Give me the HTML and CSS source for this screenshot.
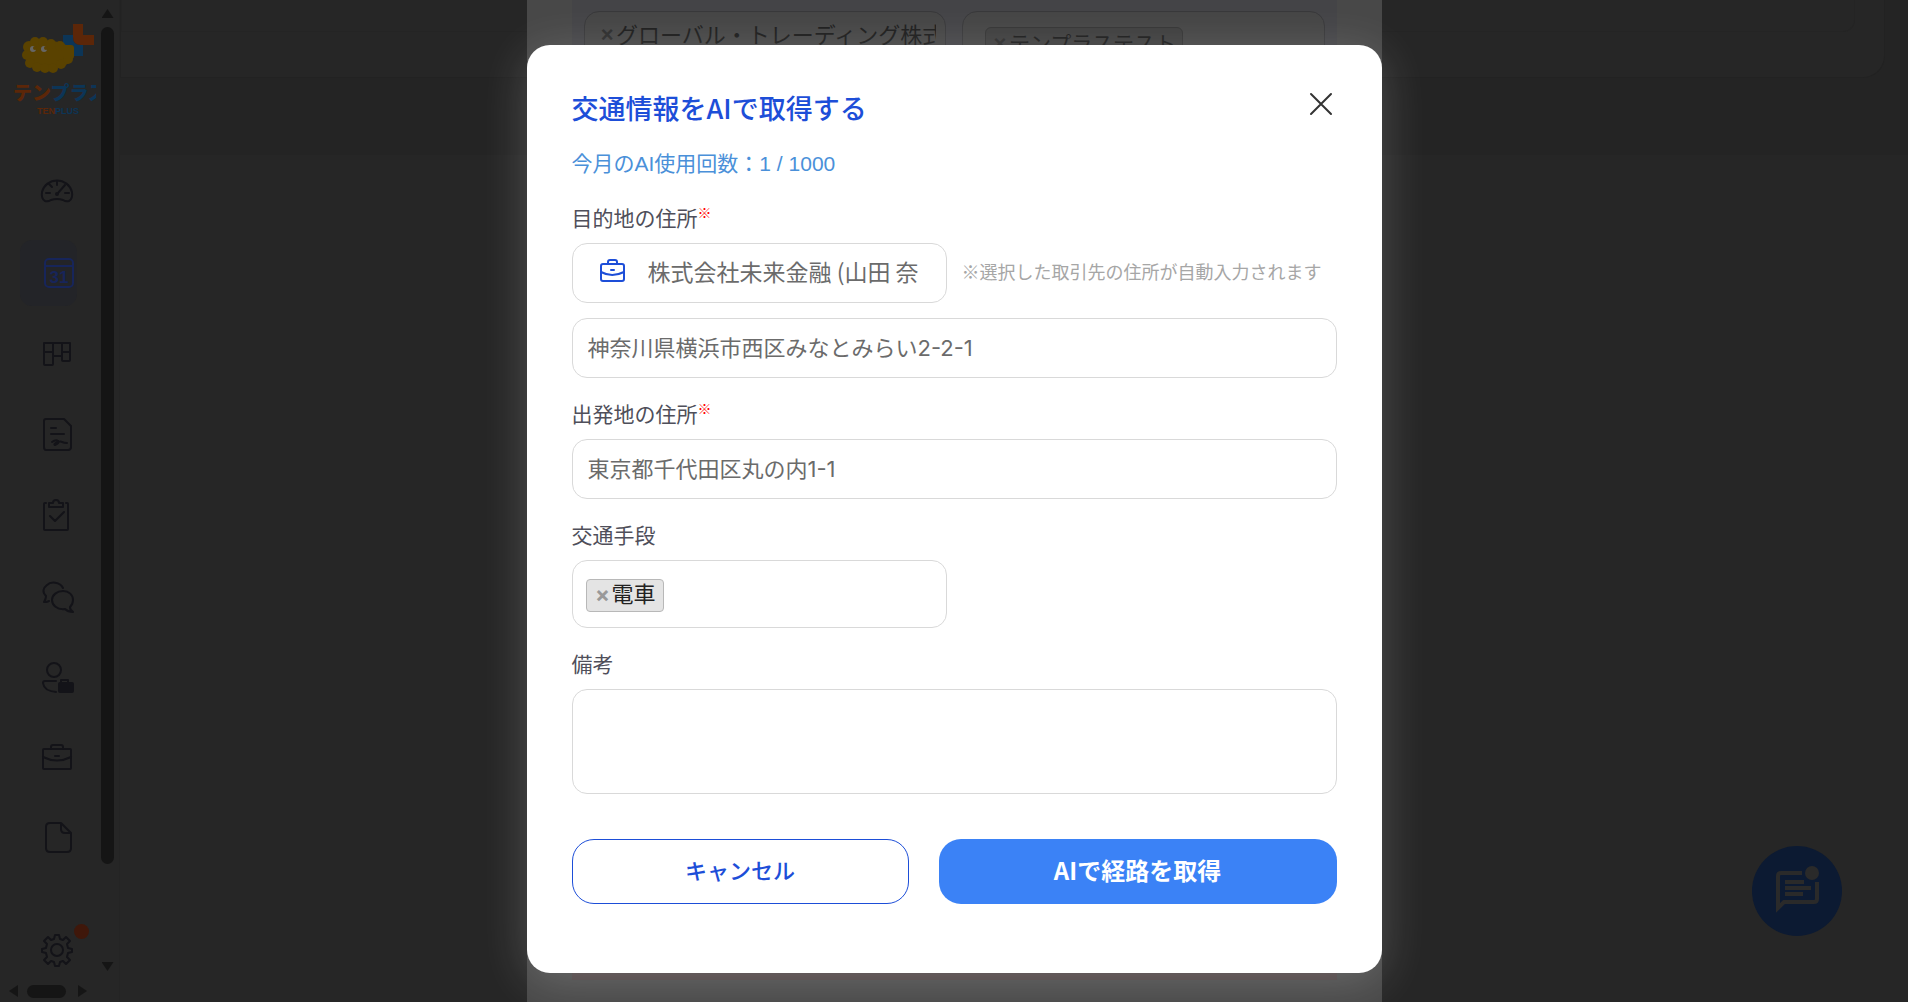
FILE: index.html
```html
<!DOCTYPE html>
<html lang="ja">
<head>
<meta charset="utf-8">
<meta name="viewport" content="width=device-width, initial-scale=1">
<title>交通情報をAIで取得する</title>
<link rel="stylesheet" href="styles.css">
</head>
<body>
<div class="app">
  <aside class="sidebar">
    <div class="sidebar-body">
      <a class="logo" href="#" aria-label="テンプラス">
        <svg class="logo-mark" viewBox="0 0 82 56" aria-hidden="true">
          <path class="mark-blue" d="M50 13h10v2q0 8 8 8h2v11H60V24H50z"/>
          <path class="mark-orange" d="M60 2h10v11h11v10H68q-8 0-8-8z"/>
          <g class="mark-yellow">
            <ellipse cx="36" cy="33" rx="24" ry="14"/>
            <circle cx="16" cy="25" r="6"/><circle cx="22" cy="20" r="5"/><circle cx="30" cy="20" r="5"/><circle cx="38" cy="22" r="5"/><circle cx="47" cy="24" r="5"/>
            <circle cx="14" cy="33" r="5"/><circle cx="17" cy="41" r="5"/><circle cx="24" cy="45" r="5"/><circle cx="32" cy="46" r="5"/><circle cx="40" cy="46" r="5"/><circle cx="48" cy="42" r="5"/><circle cx="55" cy="37" r="5"/>
            <rect x="50" y="23" width="11" height="14" rx="3"/>
          </g>
          <g class="mark-white"><circle cx="20" cy="27" r="3"/><circle cx="31" cy="27" r="3"/></g>
          <g class="mark-yellow"><circle cx="22" cy="26" r="2"/><circle cx="33" cy="26" r="2"/></g>
        </svg>
        <span class="logo-name"><span class="warm">テン</span><span class="cool">プラス</span></span>
        <span class="logo-sub"><span class="warm">TEN</span><span class="cool">PLUS</span></span>
      </a>
      <nav class="nav" aria-label="メイン">
        <a href="#" aria-label="ダッシュボード"><svg viewBox="0 2 36 36"><path d="M6 29q-4-2-3-9a15.500 15.500 0 0 1 30 0q1 7-3 9-3 1-6-1-6-2-12 0-3 2-6 1z"/><path d="M18 9v4M10 12l3 3M7 21h4M26 21h4M19 21l7-8"/><circle class="solid" cx="18" cy="22" r="1"/></svg></a>
        <a class="active" href="#" aria-label="カレンダー"><svg viewBox="0 0 36 36"><rect x="6" y="4" width="28" height="28" rx="4"/><path d="M6 11h28"/><text x="20" y="28">31</text></svg></a>
        <a href="#" aria-label="ボード"><svg viewBox="0 0 36 36"><path d="M5 7h26v17q0 1-1 1h-6q-1 0-1-1V7M14 7v21q0 1-1 1H6q-1 0-1-1V7M5 16h9M23 16h8M14 20h9"/></svg></a>
        <a href="#" aria-label="契約書"><svg viewBox="0 0 36 36"><path d="M7 2h18l7 7v21q0 3-3 3H7q-2 0-2-3V4q0-2 2-2zM12 11h5M12 17h13M13 25q4-3 6-1t-3 4q-2-1 3-3 3-1 4 0 2 1 5 1"/></svg></a>
        <a href="#" aria-label="タスク"><svg viewBox="0 0 36 36"><path d="M7 5H6q-1 0-1 1v25q0 1 1 1h22q1 0 1-1V6q0-1-1-1h-1M10 9V5h4q0-3 3-3t3 3h4v4zM11 18l5 5 9-9"/></svg></a>
        <a href="#" aria-label="チャット"><svg viewBox="0 0 36 36"><path d="M24 9C21 3 12 2 8 6c-4 3-5 7-1 11 0 3-1 4-2 6 2 0 4 0 5-1M24 12c6 0 10 4 10 9 0 3-1 5-3 7 0 2 1 4 3 5-4 0-6-1-8-3-8 1-13-4-13-9s5-9 11-9z"/></svg></a>
        <a href="#" aria-label="担当者"><svg viewBox="0 0 36 36"><circle cx="15" cy="10" r="7"/><path d="M17 21H6q-2 0-2 2 1 8 13 9M22 23v-3h7v3"/><rect class="solid" x="20" y="23" width="14" height="9" rx="1"/></svg></a>
        <a href="#" aria-label="取引先"><svg viewBox="0 0 36 36"><rect x="4" y="8" width="28" height="20" rx="1"/><path d="M12 8V6q0-2 2-2h8q2 0 2 2v2M4 16q14 7 28 0M16 15h4"/></svg></a>
        <a href="#" aria-label="ファイル"><svg viewBox="0 0 36 36"><path d="M22 1H11q-4 0-4 4v21q0 4 4 4h17q4 0 4-4V11zM22 1v6q0 4 4 4h6"/></svg></a>
      </nav>
      <a class="settings" href="#" aria-label="設定"><svg viewBox="0 0 36 36"><path d="M16 3h4l1 4 3 1 3-3 4 4-3 3 1 4 4 1v3l-4 1-1 4 3 3-4 4-3-3-3 1-1 4h-4l-1-4-3-1-3 3-4-4 3-3-1-4-4-1v-3l4-1 1-4-3-3 4-4 3 3 3-1z"/><circle cx="18" cy="18" r="6"/></svg><span class="dot"></span></a>
      <div class="hscroll" aria-hidden="true"><i class="tri left"></i><i class="hthumb"></i><i class="tri right"></i></div>
    </div>
    <div class="vscroll" aria-hidden="true"><i class="tri up"></i><i class="vthumb"></i><i class="tri down"></i></div>
  </aside>
  <main class="main">
    <div class="band"><div class="card"><div class="card-inner"></div></div></div>
  </main>
</div>

<button class="fab" type="button" aria-label="メッセージ">
  <svg viewBox="0 0 48 48" aria-hidden="true"><path class="bubble" d="M29 8H8q-3 0-3 3v32l6-6h30q3 0 3-3V17"/><path class="lines" d="M12 17h19M12 23h26M12 29h18"/><circle cx="39" cy="8" r="7"/></svg>
</button>

<div class="sheet">
  <div class="sheet-body">
    <div class="sheet-field"><button class="x" type="button" aria-label="削除">×</button><span class="clip">グローバル・トレーディング株式</span></div>
    <div class="sheet-field"><span class="sheet-tag"><button class="x" type="button" aria-label="削除">×</button>テンプラステスト</span></div>
  </div>
</div>

<div class="overlay">
  <form class="modal" role="dialog" aria-modal="true" aria-labelledby="dlg-title">
    <header class="modal-head">
      <h1 id="dlg-title">交通情報をAIで取得する</h1>
      <button class="close" type="button" aria-label="閉じる"><svg viewBox="0 0 24 24"><path d="M2 2l20 20M22 2L2 22"/></svg></button>
    </header>
    <p class="usage">今月のAI使用回数：1 / 1000</p>

    <div class="group">
      <label for="client">目的地の住所<sup>※</sup></label>
      <div class="row">
        <div class="control half with-icon">
          <svg viewBox="0 0 26 24" aria-hidden="true"><rect x="1" y="5" width="23" height="17" rx="2"/><path d="M8 5V3q0-2 2-2h5q2 0 2 2v2M1 13q11 6 23 0M11 11h3"/></svg>
          <input id="client" type="text" value="株式会社未来金融 (山田 奈">
        </div>
        <span class="hint">※選択した取引先の住所が自動入力されます</span>
      </div>
      <input class="control" type="text" aria-label="目的地の住所" value="神奈川県横浜市西区みなとみらい2-2-1">
    </div>

    <div class="group">
      <label for="origin">出発地の住所<sup>※</sup></label>
      <input id="origin" class="control" type="text" value="東京都千代田区丸の内1-1">
    </div>

    <div class="group">
      <span class="label" id="means">交通手段</span>
      <div class="control half tags" role="group" aria-labelledby="means"><span class="tag"><button class="x" type="button" aria-label="電車を削除">×</button>電車</span></div>
    </div>

    <div class="group">
      <label for="note">備考</label>
      <textarea id="note" class="control"></textarea>
    </div>

    <footer class="actions">
      <button class="btn cancel" type="button">キャンセル</button>
      <button class="btn primary" type="submit">AIで経路を取得</button>
    </footer>
  </form>
</div>
</body>
</html>
```
FILE: styles.css
```css
* { box-sizing: border-box; }
html, body { height: 100%; }
body {
  margin: 0;
  background: #262626;
  overflow: hidden;
  font-family: "Liberation Sans", "Noto Sans CJK JP", sans-serif;
  font-size: 22px;
}
button, input, textarea { font: inherit; }
button { padding: 0; border: 0; background: none; cursor: pointer; }
svg { display: block; fill: none; }

/* Dimmed application */
.app { display: flex; min-height: 100vh; }
.sidebar { display: flex; width: 120px; height: 100vh; border-right: 1px solid #242424; }
.sidebar-body { display: flex; flex-direction: column; width: 101px; overflow: hidden; }
.logo { display: flex; flex-direction: column; width: 83px; height: 129px; margin: 22px 5px 0 13px; text-decoration: none; overflow: hidden; }
.logo-mark { width: 82px; height: 56px; }
.logo-name { font-size: 19px; line-height: 32px; font-weight: 900; white-space: nowrap; }
.logo-sub { margin-top: -4px; padding-left: 24px; font-size: 9px; line-height: 10px; font-weight: 700; }
.warm { color: #5c2608; }
.cool { color: #0c3557; }
.mark-blue { fill: #0c3557; }
.mark-orange { fill: #5c2608; }
.mark-yellow { fill: #5a4200; }
.mark-white { fill: #666; }
.nav { display: flex; flex-direction: column; }
.nav a { display: flex; align-items: center; height: 81px; padding-left: 39px; }
.nav svg, .settings svg { flex: none; width: 36px; height: 36px; stroke: #131318; stroke-width: 2; stroke-linejoin: round; stroke-linecap: round; }
.nav .solid { fill: #131318; }
.nav a.active { height: 66px; width: 57px; margin: 8px 0 7px 20px; padding-left: 19px; border-radius: 12px; background: #232428; }
.nav a.active svg { stroke: #17255a; }
.nav text { fill: #17255a; stroke: none; font: 700 17px "Liberation Sans", sans-serif; text-anchor: middle; }
.settings { display: flex; align-items: flex-start; margin: auto 0 0; padding: 8px 0 0 39px; height: 60px; }
.dot { width: 15px; height: 15px; margin: -8px 0 0 -1px; border-radius: 50%; background: #3f170a; }
.hscroll { display: flex; align-items: center; height: 14px; margin-bottom: 4px; padding-left: 9px; }
.hthumb { width: 39px; height: 13px; margin: 0 12px 0 9px; border-radius: 7px; background: #151515; }
.vscroll { display: flex; flex-direction: column; align-items: center; width: 13px; padding: 9px 0 31px; }
.vthumb { flex: none; width: 13px; height: 87%; margin: 9px 0 auto; border-radius: 7px; background: #151515; }
.tri { flex: none; background: #151515; }
.tri.up, .tri.down { width: 12px; height: 9px; }
.tri.left, .tri.right { width: 9px; height: 12px; }
.up { clip-path: polygon(50% 0, 100% 100%, 0 100%); }
.down { clip-path: polygon(0 0, 100% 0, 50% 100%); }
.left { clip-path: polygon(0 50%, 100% 0, 100% 100%); }
.right { clip-path: polygon(0 0, 100% 50%, 0 100%); }
.main { flex: 1; }
.band { height: 155px; padding-right: 23px; background: #242424; }
.card { height: 78px; padding-right: 29px; border: 1px solid #222; border-top: 0; border-radius: 0 0 22px 0; background: #262626; }
.card-inner { height: 32px; border: 1px solid #242424; border-top: 0; border-radius: 0 0 12px 0; }
.fab { display: flex; align-items: center; justify-content: center; position: fixed; right: 66px; bottom: 66px; width: 90px; height: 90px; border-radius: 50%; background: #0c1a32; }
.fab svg { width: 48px; height: 48px; margin-top: -4px; fill: #2a2a2a; }
.fab .bubble, .fab .lines { fill: none; stroke: #2a2a2a; stroke-width: 4; }

/* Form sheet that lies behind the dialog */
.sheet { position: fixed; inset: 0; width: 855px; max-width: 100%; margin: 0 auto; padding: 0 45px 22px; background: #484848; }
.sheet-body { display: grid; grid-template-columns: 1fr 1fr; gap: 16px; align-items: start; height: 100%; padding: 11px 12px; border-bottom: 12px solid #4c4142; background: #444447; }
.sheet-field { display: flex; align-items: flex-start; min-width: 0; height: 60px; border: 1px solid #38383a; border-radius: 15px; background: #454545; color: #1c1c1c; line-height: 32px; padding: 8px 9px 0 14px; white-space: nowrap; }
.clip { overflow: hidden; }
.x { width: 18px; color: #2c2c2c; font-weight: 700; font-size: 22px; line-height: 30px; text-align: center; }
.sheet-tag { display: flex; margin: 7px 0 0 8px; padding: 0 6px 0 5px; border: 1px solid #343434; border-radius: 6px; background: #3e3e3e; font-size: 21px; }

/* Dialog */
.overlay { position: fixed; inset: 0; display: flex; align-items: flex-start; justify-content: center; padding-top: 45px; overflow: hidden; }
.modal { width: 100%; max-width: 855px; padding: 45px 45px 69px; border-radius: 23px; background: #fff; box-shadow: 0 8px 48px rgba(255, 255, 255, .2); }
.modal-head { display: flex; align-items: flex-start; justify-content: space-between; }
h1 { margin: 0; color: #1d4ed8; font-size: 27px; line-height: 36px; font-weight: 500; font-family: "Noto Sans CJK JP", sans-serif; }
.close { width: 24px; height: 24px; margin: 2px 4px 0 0; }
.close svg { stroke: #333; stroke-width: 2; stroke-linecap: round; }
.usage { margin: 22px 0 23px; color: #4a90d9; font-size: 21px; line-height: 32px; }
.group { margin-bottom: 21px; }
label, .label { display: block; margin-bottom: 8px; color: #4f4f5a; font-size: 21px; line-height: 32px; }
sup { color: #f00; font-size: 14px; line-height: 14px; vertical-align: 8px; }
.control { display: block; width: 100%; height: 60px; padding: 0 15px 5px; border: 1px solid #d9d9d9; border-radius: 15px; background: #fff; color: #6b6b6b; font-family: Inter, "Noto Sans CJK JP", sans-serif; }
.half { width: 375px; flex: none; }
.row { display: flex; align-items: center; gap: 15px; margin-bottom: 15px; }
.with-icon { display: flex; align-items: center; gap: 22px; padding: 0 25px 5px 27px; }
.with-icon svg { flex: none; width: 26px; height: 24px; stroke: #1d4ed8; stroke-width: 2; stroke-linecap: round; }
.with-icon input { flex: 1; min-width: 0; padding: 0; border: 0; background: none; color: inherit; outline: 0; font-family: "Noto Sans CJK JP", sans-serif; font-size: 23px; }
.hint { color: #a6a6a6; font-size: 18px; line-height: 26px; white-space: nowrap; }
.tags { display: flex; align-items: center; height: 68px; padding: 2px 13px 0; }
.tag { display: flex; align-items: center; height: 33px; padding: 0 7px 2px; border: 1px solid #b8b8b8; border-radius: 4px; background: #e4e4e4; color: #222; line-height: 30px; }
.tag .x { color: #999; }
textarea.control { height: 105px; padding: 12px 15px; resize: none; }
.actions { display: grid; grid-template-columns: 337fr 398fr; gap: 30px; margin-top: 45px; }
.btn { height: 65px; padding-bottom: 5px; border-radius: 22px; font-family: "Noto Sans CJK JP", sans-serif; font-size: 22px; }
.cancel { border: 1px solid #1d4ed8; color: #1d4ed8; font-weight: 500; }
.primary { background: #3b82f6; color: #fff; font-size: 24px; font-weight: 700; }
```
